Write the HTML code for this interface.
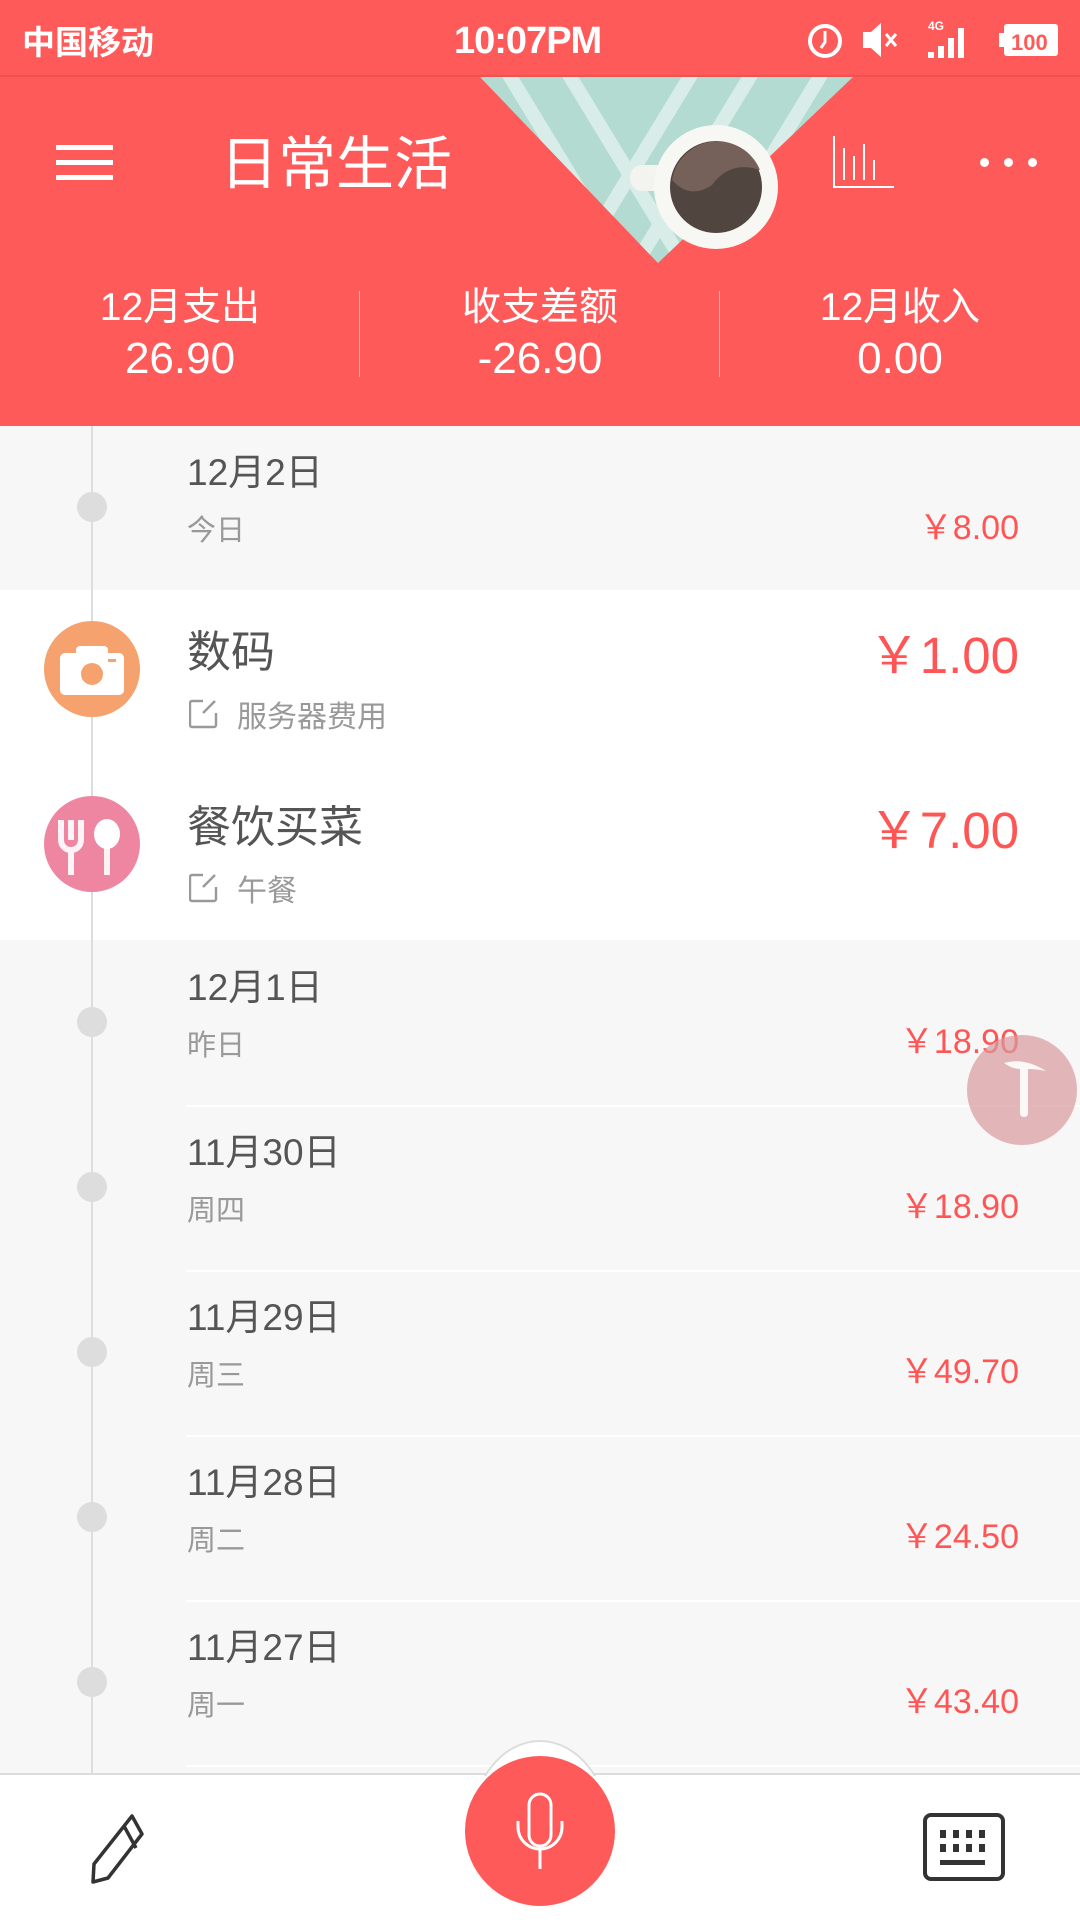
<!DOCTYPE html>
<html><head><meta charset="utf-8"><style>
*{margin:0;padding:0;box-sizing:border-box}
body{width:1080px;height:1920px;overflow:hidden;background:#f7f7f7;font-family:"Liberation Sans","Noto Sans CJK SC",sans-serif;position:relative}
.a{position:absolute;white-space:nowrap}
.hdr{position:absolute;left:0;top:0;width:1080px;height:426px;background:#ff5a5a;overflow:hidden}
.sb{position:absolute;left:0;top:0;width:1080px;height:77px;border-bottom:2px solid #ee5252}
.w{color:#fff}
.lab{font-size:39px;color:#fff;width:360px;text-align:center;top:276px}
.val{font-size:44px;color:#fff;width:360px;text-align:center;top:334px}
.div{position:absolute;top:291px;width:1px;height:86px;background:rgba(255,255,255,.5)}
.date{font-size:37px;color:#555;left:187px}
.sub{font-size:29px;color:#999;left:187px}
.amt{font-size:34px;color:#f55;right:61px}
.dot{position:absolute;left:77px;width:30px;height:30px;border-radius:50%;background:#ddd}
.sep{position:absolute;left:186px;right:0;height:2px;background:#fff}
</style></head><body>
<div class="a" style="left:91px;top:426px;width:2px;height:1350px;background:#ddd"></div>
<div class="hdr">
 <svg class="a" style="left:0;top:0" width="1080" height="426">
  <defs><clipPath id="tri"><polygon points="480,77 853,77 658,263"/></clipPath></defs>
  <g clip-path="url(#tri)">
   <rect x="480" y="77" width="373" height="190" fill="#b3dbd1"/>
   <g stroke="#e3f2ee" stroke-width="14" opacity=".8">
    <line x1="500" y1="60" x2="640" y2="290"/><line x1="560" y1="60" x2="700" y2="290"/>
    <line x1="700" y1="60" x2="560" y2="290"/><line x1="760" y1="60" x2="620" y2="290"/>
    <line x1="830" y1="60" x2="690" y2="290"/>
   </g>
  </g>
  <rect x="630" y="165" width="40" height="26" rx="12" fill="#f3f3f0"/>
  <circle cx="716" cy="187" r="62" fill="#f7f7f4"/>
  <circle cx="716" cy="187" r="46" fill="#514540"/>
  <path d="M672 180 A46 46 0 0 1 760 170 Q730 160 712 185 Q690 200 672 180Z" fill="#756159"/>
 </svg>
 <div class="sb"></div>
 <div class="a w" style="left:22px;top:16px;font-size:33px;font-weight:bold">中国移动</div>
 <div class="a w" style="left:454px;top:20px;font-size:38px;font-weight:bold;letter-spacing:-1px">10:07PM</div>
 <svg class="a" style="left:800px;top:18px" width="265" height="42">
  <circle cx="25" cy="23" r="15" fill="none" stroke="#fff" stroke-width="4"/><path d="M25 13v11l-4 6" stroke="#fff" stroke-width="3" fill="none"/>
  <path d="M63 14h8l10-9v34l-10-9h-8z" fill="#fff"/><path d="M86 16l10 12M96 16l-10 12" stroke="#fff" stroke-width="3"/>
  <text x="128" y="12" font-size="12" fill="#fff" font-weight="bold" font-family="Liberation Sans">4G</text>
  <rect x="128" y="34" width="6" height="6" fill="#fff"/><rect x="138" y="28" width="6" height="12" fill="#fff"/><rect x="148" y="20" width="6" height="20" fill="#fff"/><rect x="158" y="10" width="6" height="30" fill="#fff"/>
  <rect x="204" y="6" width="54" height="32" rx="3" fill="#fff"/><rect x="199" y="15" width="5" height="14" fill="#fff"/>
  <text x="211" y="32" font-size="22" font-weight="bold" fill="#ff5a5a" font-family="Liberation Sans">100</text>
 </svg>
 <div class="a" style="left:56px;top:145px;width:57px;height:5px;background:#fff;box-shadow:0 15px 0 #fff,0 30px 0 #fff"></div>
 <div class="a w" style="left:220px;top:117px;font-size:58px">日常生活</div>
 <svg class="a" style="left:830px;top:134px" width="70" height="56"><path d="M4 2v51h60M14 14v32M24 22v24M34 10v36M44 26v20" stroke="#fff" stroke-width="2" fill="none"/></svg>
 <div class="a" style="left:980px;top:158px;width:9px;height:9px;border-radius:50%;background:#fff;box-shadow:24px 0 0 #fff,48px 0 0 #fff"></div>
 <div class="a lab" style="left:0">12月支出</div><div class="a val" style="left:0">26.90</div>
 <div class="div" style="left:359px"></div>
 <div class="a lab" style="left:360px">收支差额</div><div class="a val" style="left:360px">-26.90</div>
 <div class="div" style="left:719px"></div>
 <div class="a lab" style="left:720px">12月收入</div><div class="a val" style="left:720px">0.00</div>
</div>

<div class="dot" style="top:492px"></div>
<div class="a date" style="top:442px">12月2日</div>
<div class="a sub" style="top:507px">今日</div>
<div class="a amt" style="top:500px">￥8.00</div>

<div class="a" style="left:0;top:590px;width:1080px;height:350px;background:#fff"></div>
<div class="a" style="left:91px;top:590px;width:2px;height:350px;background:#ddd"></div>
<svg class="a" style="left:44px;top:621px" width="96" height="96"><circle cx="48" cy="48" r="48" fill="#f5a26f"/><rect x="16" y="32" width="64" height="42" rx="5" fill="#fff"/><rect x="32" y="25" width="32" height="12" rx="4" fill="#fff"/><circle cx="48" cy="53" r="11" fill="#f5a26f"/><rect x="64" y="38" width="8" height="3" fill="#f5a26f"/></svg>
<div class="a" style="left:187px;top:616px;font-size:44px;color:#555">数码</div>
<svg class="a" style="left:189px;top:699px" width="30" height="30"><path d="M14 2H3a2 2 0 0 0-2 2v22a2 2 0 0 0 2 2h22a2 2 0 0 0 2-2V14M14 14L26 2" stroke="#999" stroke-width="2.4" fill="none"/></svg>
<div class="a" style="left:237px;top:692px;font-size:30px;color:#999">服务器费用</div>
<div class="a" style="right:61px;top:614px;font-size:51px;color:#f55">￥1.00</div>

<svg class="a" style="left:44px;top:796px" width="96" height="96"><circle cx="48" cy="48" r="48" fill="#ee86a2"/><path d="M17 24v20a10 10 0 0 0 20 0V24M27 24v20M27 54v25" stroke="#fff" stroke-width="6" fill="none" opacity=".9"/><ellipse cx="63" cy="38" rx="13" ry="15" fill="#fff"/><path d="M63 50v29" stroke="#fff" stroke-width="6" opacity=".9"/></svg>
<div class="a" style="left:187px;top:791px;font-size:44px;color:#555">餐饮买菜</div>
<svg class="a" style="left:189px;top:873px" width="30" height="30"><path d="M14 2H3a2 2 0 0 0-2 2v22a2 2 0 0 0 2 2h22a2 2 0 0 0 2-2V14M14 14L26 2" stroke="#999" stroke-width="2.4" fill="none"/></svg>
<div class="a" style="left:237px;top:866px;font-size:30px;color:#999">午餐</div>
<div class="a" style="right:61px;top:789px;font-size:51px;color:#f55">￥7.00</div>

<div class="dot" style="top:1007px"></div><div class="a date" style="top:957px">12月1日</div><div class="a sub" style="top:1022px">昨日</div><div class="a amt" style="top:1014px">￥18.90</div>
<div class="sep" style="top:1105px"></div>
<div class="dot" style="top:1172px"></div><div class="a date" style="top:1122px">11月30日</div><div class="a sub" style="top:1187px">周四</div><div class="a amt" style="top:1179px">￥18.90</div>
<div class="sep" style="top:1270px"></div>
<div class="dot" style="top:1337px"></div><div class="a date" style="top:1287px">11月29日</div><div class="a sub" style="top:1352px">周三</div><div class="a amt" style="top:1344px">￥49.70</div>
<div class="sep" style="top:1435px"></div>
<div class="dot" style="top:1502px"></div><div class="a date" style="top:1452px">11月28日</div><div class="a sub" style="top:1517px">周二</div><div class="a amt" style="top:1509px">￥24.50</div>
<div class="sep" style="top:1600px"></div>
<div class="dot" style="top:1667px"></div><div class="a date" style="top:1617px">11月27日</div><div class="a sub" style="top:1682px">周一</div><div class="a amt" style="top:1674px">￥43.40</div>
<div class="sep" style="top:1765px"></div>

<svg class="a" style="left:967px;top:1035px" width="110" height="110"><circle cx="55" cy="55" r="55" fill="#d99a9e" opacity=".7"/><path d="M37 28q20-6 42 8q-10-2-18-2v44q0 4-4 4t-4-4V34q-8 0-16-6z" fill="#fff" opacity=".9"/></svg>

<div class="a" style="left:0;top:1773px;width:1080px;height:147px;background:#fff;border-top:2px solid #ddd"></div>
<div class="a" style="left:470px;top:1740px;width:140px;height:36px;overflow:hidden"><div style="width:140px;height:180px;border-radius:50%;border:2px solid #ddd;background:#fff"></div></div>
<div class="a" style="left:465px;top:1756px;width:150px;height:150px;border-radius:50%;background:#ff5a5a"></div>
<svg class="a" style="left:505px;top:1788px" width="70" height="90"><rect x="24" y="6" width="22" height="52" rx="11" fill="none" stroke="#fff" stroke-width="3"/><path d="M13 33v6a22 22 0 0 0 44 0v-6M35 61v20" stroke="#fff" stroke-width="3" fill="none"/></svg>
<svg class="a" style="left:80px;top:1812px" width="75" height="72"><path d="M52 4l10 18-34 44-15 4 1-18zM44 14l12 22" stroke="#333" stroke-width="3.5" fill="none" stroke-linejoin="round"/></svg>
<svg class="a" style="left:922px;top:1812px" width="86" height="70"><rect x="3" y="3" width="78" height="64" rx="6" fill="none" stroke="#333" stroke-width="4"/><g fill="#333"><rect x="18" y="18" width="6" height="8"/><rect x="31" y="18" width="6" height="8"/><rect x="44" y="18" width="6" height="8"/><rect x="57" y="18" width="6" height="8"/><rect x="18" y="32" width="6" height="8"/><rect x="31" y="32" width="6" height="8"/><rect x="44" y="32" width="6" height="8"/><rect x="57" y="32" width="6" height="8"/><rect x="18" y="48" width="45" height="5"/></g></svg>
</body></html>
